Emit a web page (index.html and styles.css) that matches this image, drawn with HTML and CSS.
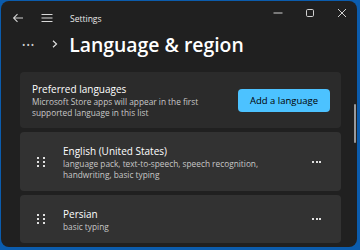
FILE: index.html
```html
<!DOCTYPE html>
<html lang="en">
  <head>
    <meta charset="UTF-8" />
    <meta name="viewport" content="width=device-width, initial-scale=1.0" />
    <title>Settings</title>
    <link rel="stylesheet" href="styles.css">
  </head>

  <body>
    <div class="window">
      <div class="titlebar">
        <div class="title-left">
          <svg class="tb-icon back" width="12" height="10" viewBox="0 0 12 10">
            <path d="M11 5H2M5.5 1.2L1.6 5l3.9 3.8" fill="none" stroke="#d0d0d0" stroke-width="1.1" />
          </svg>
          <svg class="tb-icon menu" width="12" height="10" viewBox="0 0 12 10">
            <path d="M0.5 1.5h11M0.5 5h11M0.5 8.5h11" stroke="#d8d8d8" stroke-width="1.1" />
          </svg>
          <span class="app-name">Settings</span>
        </div>
        <div class="controls">
          <svg width="10" height="10" viewBox="0 0 10 10"><path d="M0.5 5h9" stroke="#d0d0d0" stroke-width="1" /></svg>
          <svg width="10" height="10" viewBox="0 0 10 10"><rect x="1.5" y="1.5" width="7" height="7" rx="1.2" fill="none" stroke="#d0d0d0" stroke-width="1" /></svg>
          <svg width="10" height="10" viewBox="0 0 10 10"><path d="M1 1l8 8M9 1l-8 8" stroke="#d0d0d0" stroke-width="1" /></svg>
        </div>
      </div>

      <div class="page-head">
        <span class="crumb-dots">&bull;&bull;&bull;</span>
        <svg class="crumb-arrow" width="6" height="8" viewBox="0 0 6 8"><path d="M1 0.8L4.5 4L1 7.2" fill="none" stroke="#e0e0e0" stroke-width="1.2" /></svg>
        <h1>Language &amp; region</h1>
      </div>

      <div class="list">
        <div class="card intro">
          <div class="card-text">
            <div class="card-title">Preferred languages</div>
            <div class="card-sub">Microsoft Store apps will appear in the first supported language in this list</div>
          </div>
          <button class="add-btn">Add a language</button>
        </div>

        <div class="card lang">
          <div class="grip"><i></i><i></i><i></i><i></i><i></i><i></i></div>
          <div class="card-text">
            <div class="card-title">English (United States)</div>
            <div class="card-sub">language pack, text-to-speech, speech recognition, handwriting, basic typing</div>
          </div>
          <div class="more"><i></i><i></i><i></i></div>
        </div>

        <div class="card lang short">
          <div class="grip"><i></i><i></i><i></i><i></i><i></i><i></i></div>
          <div class="card-text">
            <div class="card-title">Persian</div>
            <div class="card-sub">basic typing</div>
          </div>
          <div class="more"><i></i><i></i><i></i></div>
        </div>
      </div>

      <div class="scrollbar"></div>
    </div>
  </body>
</html>
```

FILE: styles.css
```css
html,
body {
  margin: 0;
  height: 250px;
  overflow: hidden;
}

body {
  background-color: #0b5cad;
  font-family: "Open Sans", "Noto Sans", sans-serif;
  color: #ffffff;
}

.window {
  position: relative;
  margin: 1px 3px 0 1px;
  height: 246px;
  background-color: #202020;
  border-radius: 8px;
  overflow: hidden;
}

.titlebar {
  display: flex;
  justify-content: space-between;
  align-items: center;
  height: 34px;
}

.title-left {
  display: flex;
  align-items: center;
  padding-left: 11px;
}

.tb-icon.back {
  margin-right: 17px;
}

.tb-icon.menu {
  margin-right: 17px;
}

.app-name {
  font-size: 8.5px;
  color: #e8e8e8;
}

.controls {
  display: flex;
  align-items: center;
  gap: 22px;
  padding-right: 10px;
  margin-top: -10px;
}

.page-head {
  display: flex;
  align-items: center;
  height: 26px;
  padding-left: 21px;
  margin-top: -4px;
}

.crumb-dots {
  font-size: 9px;
  letter-spacing: 1px;
  color: #d0d0d0;
  margin-right: 17px;
}

.crumb-arrow {
  margin-right: 11px;
}

.page-head h1 {
  margin: 0;
  font-size: 19.4px;
  font-weight: 600;
  color: #ffffff;
}

.list {
  display: flex;
  flex-direction: column;
  gap: 4px;
  padding: 15px 16px 0 19px;
}

.card {
  display: flex;
  align-items: center;
  border-radius: 4px;
  background-color: #2b2b2b;
}

.card.intro {
  height: 56px;
  padding: 0 12px;
}

.card.lang {
  background-color: #323232;
  height: 59px;
  padding: 0 20px 0 17px;
}

.card.lang.short {
  height: 48px;
}

.card-text {
  flex: 1;
}

.card-title {
  font-size: 10px;
  line-height: 14px;
  color: #ffffff;
}

.card-sub {
  font-size: 8.3px;
  line-height: 11px;
  color: #c8c8c8;
  max-width: 200px;
}

.add-btn {
  width: 92px;
  height: 23px;
  border: none;
  border-radius: 4px;
  background-color: #4cc2ff;
  color: #000000;
  font-family: "Open Sans", "Noto Sans", sans-serif;
  font-size: 9.5px;
  margin-right: -1px;
}

.grip {
  display: grid;
  grid-template-columns: 2px 2px;
  column-gap: 4px;
  row-gap: 2px;
  margin-right: 18px;
}

.grip i,
.more i {
  display: block;
  width: 2px;
  height: 2px;
  background-color: #e0e0e0;
}

.more {
  display: flex;
  gap: 1.5px;
}

.scrollbar {
  position: absolute;
  right: 1px;
  top: 103px;
  width: 2px;
  height: 39px;
  background-color: #9a9a9a;
  border-radius: 1px;
}
```
